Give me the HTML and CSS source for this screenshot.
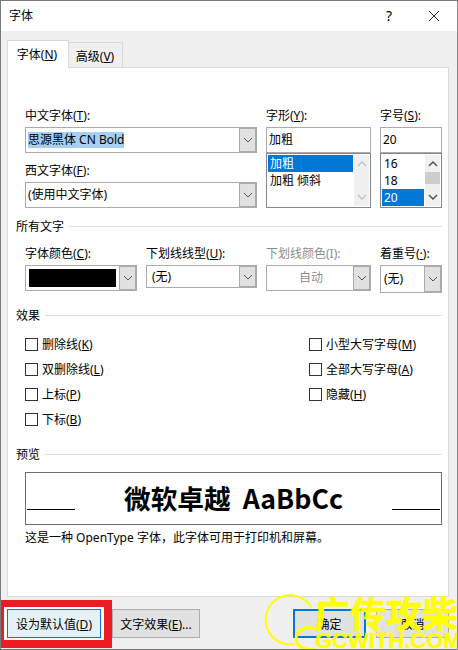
FILE: index.html
```html
<!DOCTYPE html>
<html lang="zh-CN">
<head>
  <meta charset="UTF-8" />
  <title>字体</title>
  <link rel="stylesheet" href="styles.css">
</head>
<body>

<div class="dialog">
  <div class="titlebar">
    <span class="title">字体</span>
    <span class="help">?</span>
    <svg class="close" width="12" height="12" viewBox="0 0 12 12"><path d="M1 1L11 11M11 1L1 11" stroke="#222" stroke-width="1" fill="none"/></svg>
  </div>

  <div class="tabs">
    <div class="tab active">字体(<u>N</u>)</div>
    <div class="tab">高级(<u>V</u>)</div>
  </div>

  <div class="panel">
    <div class="font-row">
      <div>
        <div class="label">中文字体(<u>T</u>):</div>
        <div class="combo h26">
          <div class="combo-text"><span class="selected-text">思源黑体 CN Bold</span></div>
          <div class="arrow"><svg width="10" height="6" viewBox="0 0 10 6"><path d="M1 1L5 5L9 1" stroke="#555" fill="none"/></svg></div>
        </div>
        <div class="label second">西文字体(<u>F</u>):</div>
        <div class="combo h26">
          <div class="combo-text">(使用中文字体)</div>
          <div class="arrow"><svg width="10" height="6" viewBox="0 0 10 6"><path d="M1 1L5 5L9 1" stroke="#555" fill="none"/></svg></div>
        </div>
      </div>
      <div>
        <div class="label">字形(<u>Y</u>):</div>
        <div class="field">加粗</div>
        <div class="listbox">
          <div class="items">
            <div class="item on">加粗</div>
            <div class="item">加粗 倾斜</div>
          </div>
          <div class="scroll off">
            <svg width="10" height="6" viewBox="0 0 10 6"><path d="M1 5L5 1L9 5" stroke="#c4c4c4" stroke-width="1.5" fill="none"/></svg>
            <svg width="10" height="6" viewBox="0 0 10 6"><path d="M1 1L5 5L9 1" stroke="#c4c4c4" stroke-width="1.5" fill="none"/></svg>
          </div>
        </div>
      </div>
      <div>
        <div class="label">字号(<u>S</u>):</div>
        <div class="field">20</div>
        <div class="listbox">
          <div class="items">
            <div class="item">16</div>
            <div class="item">18</div>
            <div class="item on">20</div>
          </div>
          <div class="scroll">
            <svg width="10" height="6" viewBox="0 0 10 6"><path d="M1 5L5 1L9 5" stroke="#555" stroke-width="1.5" fill="none"/></svg>
            <div class="thumb"></div>
            <svg width="10" height="6" viewBox="0 0 10 6"><path d="M1 1L5 5L9 1" stroke="#555" stroke-width="1.5" fill="none"/></svg>
          </div>
        </div>
      </div>
    </div>

    <div class="section-title first">所有文字</div>
    <div class="attr-row">
      <div>
        <div class="label">字体颜色(<u>C</u>):</div>
        <div class="combo h26">
          <div class="combo-text"><div class="swatch"></div></div>
          <div class="arrow"><svg width="10" height="6" viewBox="0 0 10 6"><path d="M1 1L5 5L9 1" stroke="#555" fill="none"/></svg></div>
        </div>
      </div>
      <div>
        <div class="label">下划线线型(<u>U</u>):</div>
        <div class="combo h23">
          <div class="combo-text pad">(无)</div>
          <div class="arrow"><svg width="10" height="6" viewBox="0 0 10 6"><path d="M1 1L5 5L9 1" stroke="#555" fill="none"/></svg></div>
        </div>
      </div>
      <div>
        <div class="label disabled">下划线颜色(I):</div>
        <div class="combo h26">
          <div class="combo-text center disabled">自动</div>
          <div class="arrow"><svg width="10" height="6" viewBox="0 0 10 6"><path d="M1 1L5 5L9 1" stroke="#555" fill="none"/></svg></div>
        </div>
      </div>
      <div>
        <div class="label">着重号(<u>·</u>):</div>
        <div class="combo h28">
          <div class="combo-text pad-small">(无)</div>
          <div class="arrow"><svg width="10" height="6" viewBox="0 0 10 6"><path d="M1 1L5 5L9 1" stroke="#555" fill="none"/></svg></div>
        </div>
      </div>
    </div>

    <div class="section-title effects">效果</div>
    <div class="checks">
      <label class="check"><span class="box"></span>删除线(<u>K</u>)</label>
      <label class="check"><span class="box"></span>小型大写字母(<u>M</u>)</label>
      <label class="check"><span class="box"></span>双删除线(<u>L</u>)</label>
      <label class="check"><span class="box"></span>全部大写字母(<u>A</u>)</label>
      <label class="check"><span class="box"></span>上标(<u>P</u>)</label>
      <label class="check"><span class="box"></span>隐藏(<u>H</u>)</label>
      <label class="check"><span class="box"></span>下标(<u>B</u>)</label>
    </div>

    <div class="section-title preview-title">预览</div>
    <div class="preview">
      <span class="rule"></span>
      <span class="sample">微软卓越&nbsp; AaBbCc</span>
      <span class="rule"></span>
    </div>
    <div class="note">这是一种 OpenType 字体，此字体可用于打印机和屏幕。</div>
  </div>

  <div class="footer">
    <button class="btn default-btn">设为默认值(<u>D</u>)</button>
    <button class="btn effect-btn">文字效果(<u>E</u>)...</button>
    <button class="btn ok-btn">确定</button>
    <button class="btn cancel-btn">取消</button>
  </div>

  <div class="highlight"></div>
  <div class="watermark">
    <svg class="wm-ring" width="80" height="56" viewBox="0 0 80 56"><path d="M52 13A24.500 24.500 0 1 0 35 50" stroke="#ffff00" stroke-width="2" fill="none"/><path d="M57 35C46 31 37 36 37 45C37 52 46 57 57 55" stroke="#ffff00" stroke-width="3" fill="none"/></svg>
    <div class="wm-cn">广传攻柴</div>
    <div class="wm-en">GCWITH.COM</div>
  </div>
</div>

</body>
</html>
```

FILE: styles.css
```css
* { box-sizing: border-box; margin: 0; padding: 0; }
html, body { width: 458px; height: 650px; overflow: hidden; }
body { font-family: "Noto Sans", "Noto Sans CJK SC", sans-serif; font-size: 12px; line-height: 16px; color: #000; }
u { text-underline-offset: 1px; }

.dialog { position: relative; width: 458px; height: 650px; background: #f0f0f0; border: 1px solid #7a7a7a; border-right-color: #8a8a8a; display: flex; flex-direction: column; overflow: hidden; }
.titlebar { height: 30px; flex: none; background: #fff; display: flex; align-items: center; padding-left: 8px; }
.title { flex: 1; }
.help { width: 12px; margin-right: 33px; font-size: 14px; text-align: center; }
.close { margin-right: 17px; }

.tabs { display: flex; align-items: flex-end; height: 37px; flex: none; padding-left: 6px; position: relative; z-index: 1; margin-bottom: -1px; }
.tab { height: 26px; width: 54px; border: 1px solid #d9d9d9; border-left: 0; padding-right: 1px; text-align: center; line-height: 27px; }
.tab.active { width: 62px; height: 28px; background: #fff; border-left: 1px solid #d9d9d9; border-bottom: 0; padding-right: 2px; line-height: 28px; }

.panel { height: 530px; flex: none; margin: 0 8px 0 6px; background: #fff; border: 1px solid #d9d9d9; padding: 39px 6px 0 8px; }

.font-row { display: grid; grid-template-columns: 232px 105px 62px; column-gap: 9px; margin-left: 9px; }
.label { height: 16px; margin-bottom: 4px; padding-top: 1px; white-space: nowrap; }
.label.second { margin-top: 9px; }
.disabled { color: #8d8d8d; }

.combo { display: flex; border: 1px solid #ababab; background: #fff; }
.h23 { height: 23px; }
.h26 { height: 26px; }
.h28 { height: 28px; }
.combo-text { flex: 1; min-width: 0; display: flex; align-items: center; padding-left: 2px; white-space: nowrap; }
.combo-text.pad { padding-left: 5px; }
.combo-text.pad-small { padding-left: 3px; }
.combo-text.center { justify-content: center; }
.selected-text { background: #a6d0f2; }
.arrow { width: 18px; flex: none; margin: -1px -1px -1px 0; background: #e1e1e1; border: 2px solid #ababab; border-left-width: 1px; display: flex; align-items: center; justify-content: center; }

.field { height: 26px; border: 1px solid #ababab; padding-left: 2px; line-height: 24px; }
.listbox { height: 55px; border: 1px solid #828790; display: flex; padding: 1px; background: #fff; }
.items { flex: 1; min-width: 0; }
.item { height: 17px; line-height: 17px; padding-left: 2px; white-space: nowrap; }
.item.on { background: #0078d7; color: #fff; }
.scroll { width: 15px; margin-left: 1px; background: #f0f0f0; display: flex; flex-direction: column; align-items: center; justify-content: space-between; padding: 6px 0; }
.thumb { flex: 1; width: 15px; background: #cdcdcd; margin: 5px 0 10px; }

.section-title { height: 16px; padding-top: 2px; display: flex; align-items: center; gap: 5px; white-space: nowrap; }
.section-title::after { content: ""; flex: 1; height: 1px; margin-top: -2px; background: #dfdfdf; }
.section-title.first { margin-top: 10px; }
.section-title.effects { margin-top: 14px; }
.section-title.preview-title { margin-top: 19px; }

.attr-row { display: grid; grid-template-columns: 112px 111px 105px 62px; column-gap: 9px; margin: 11px 0 0 9px; align-items: start; }
.swatch { width: 87px; height: 18px; margin-left: 1px; background: #000; }

.checks { display: grid; grid-template-columns: 284px 1fr; row-gap: 9px; margin: 13px 0 0 9px; }
.check { display: flex; align-items: center; height: 16px; padding-top: 2px; white-space: nowrap; }
.box { width: 13px; height: 13px; border: 1px solid #333; margin: -2px 4px 0 0; flex: none; background: #fff; }

.preview { height: 53px; margin: 10px 0 0 9px; border: 1px solid #6d6d6d; display: flex; align-items: center; justify-content: space-between; padding: 0 1px; }
.rule { width: 48px; height: 1px; background: #000; margin-top: 22px; }
.sample { font-family: "Noto Sans CJK SC", sans-serif; font-weight: 700; font-size: 26.67px; line-height: 36px; margin-top: -2px; }
.note { margin: 5px 0 0 9px; height: 16px; }

.footer { flex: 1; display: flex; padding: 12px 8px 0 6px; }
.btn { height: 29px; font-family: inherit; font-size: 12px; color: #000; background: #e1e1e1; border: 1px solid #adadad; }
.default-btn { width: 94px; background: #e5f1fb; border-color: #0078d7; box-shadow: 0 0 0 3px #fff; }
.effect-btn { width: 88px; margin-left: 11px; }
.ok-btn { width: 73px; margin-left: auto; border: 2px solid #0078d7; }
.cancel-btn { width: 73px; margin-left: 10px; }

.highlight { position: absolute; left: -1px; top: 599px; width: 112px; height: 48px; border: solid #ed1c24; border-width: 7px 8px 8px 4px; pointer-events: none; }

.watermark { position: absolute; left: 0; top: 0; width: 100%; height: 100%; color: #ffff00; font-weight: 700; pointer-events: none; overflow: hidden; }
.wm-ring { position: absolute; left: 258px; top: 593px; }
.wm-cn { position: absolute; left: 313px; top: 588px; font-family: "Noto Sans CJK SC", sans-serif; font-size: 36px; line-height: 46px; white-space: nowrap; -webkit-text-stroke: 0.6px #ffff00; }
.wm-en { position: absolute; left: 314px; top: 630px; font-family: "Liberation Sans", sans-serif; font-size: 22px; line-height: 19px; white-space: nowrap; -webkit-text-stroke: 0.4px #ffff00; }
```
